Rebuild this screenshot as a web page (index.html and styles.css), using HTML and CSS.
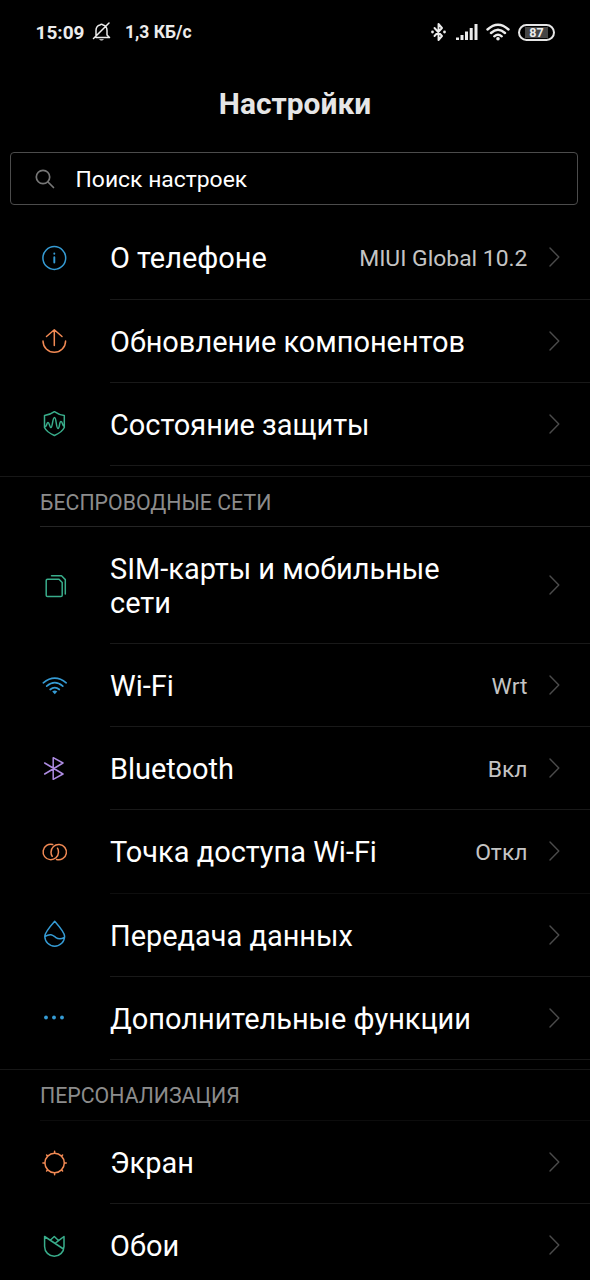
FILE: index.html
```html
<!DOCTYPE html>
<html lang="ru">
<head>
<meta charset="utf-8">
<title>Настройки</title>
<link rel="stylesheet" href="styles.css">
</head>
<body>
<svg class="defs" width="0" height="0"><defs>
  <symbol id="chevron" viewBox="0 0 12 20"><path d="M1 1 9.8 10 1 19"/></symbol>
</defs></svg>
<main class="screen">
  <header class="status">
    <span class="clock">15:09</span>
    <svg class="bell" width="20" height="20" viewBox="0 0 20 20"><path d="M4 15V8.5Q4 4 8 3Q9.500 1.500 11 3Q15 4 15 8.500V13L17.500 15.500H4M1.500 16.500 17 1"/><path class="solid" d="M7 17.300h5q-2.500 2.500-5 0z"/></svg>
    <span class="speed">1,3 КБ/с</span>
    <div class="indicators">
      <svg width="18" height="20" viewBox="0 0 18 20"><path class="semi" d="M4.500 6 12 14 8.500 18V2L12 6 4.500 14"/><circle class="solid" cx="2.500" cy="10" r="1.400"/><circle class="solid" cx="14.500" cy="10" r="1.400"/></svg>
      <svg class="signal" width="24" height="20" viewBox="0 0 24 20"><path class="solid" d="M1 15.500h3V18H1zM5.500 13h3v5h-3zM10 9.500h3V18h-3zM14.700 6h3v12h-3zM19.500 2h3v16h-3z"/></svg>
      <svg class="wifi" width="24" height="20" viewBox="0 0 24 20"><path class="thick" d="M1.500 7.500Q12-2 22.500 7.500M5 11Q12 4.500 19 11M8.300 14.300Q12 11 15.700 14.300"/><circle class="solid" cx="12" cy="16.800" r="1.800"/></svg>
      <span class="battery"><span class="charge">87</span></span>
    </div>
  </header>
  <h1 class="title">Настройки</h1>
  <div class="search">
    <svg width="20" height="20" viewBox="0 0 20 20"><circle cx="8" cy="8" r="6.700"/><path d="m13 13 5.500 5.500"/></svg>
    <span>Поиск настроек</span>
  </div>

  <section class="group">
    <div class="row">
      <svg class="icon blue" viewBox="-16 -16 32 32"><circle cx=".3" cy="0" r="11.400"/><path class="semi" d="M.3-.8V4.500M.3-4.600v.4"/></svg>
      <div class="body"><span class="label">О телефоне</span><span class="value">MIUI Global 10.2</span><svg class="chevron"><use href="#chevron"/></svg></div>
    </div>
    <div class="row">
      <svg class="icon orange" viewBox="-16 -16 32 32"><path d="M.3 4.500V-11M-7.500-4.500.3-11.200 8-4.500M-11 0a11.300 11.300 0 0 0 22.600 0"/></svg>
      <div class="body"><span class="label">Обновление компонентов</span><svg class="chevron"><use href="#chevron"/></svg></div>
    </div>
    <div class="row">
      <svg class="icon green" viewBox="-16 -16 32 32"><path d="M.4-12.300Q5-9 10.300-8.500V3.500Q8 8.300.4 11.500Q-7.200 8.300-9.500 3.500V-8.500Q-4-9 .4-12.300zM-9.500 2.500C-7 3.500-7.500-1.500-6-1.500S-4.500 3.500-3 3.500-1.500-6.500.5-6.500 2 4.500 4 4.500 5-2.500 7-2.500 8 2.500 10.300 2.500"/></svg>
      <div class="body"><span class="label">Состояние защиты</span><svg class="chevron"><use href="#chevron"/></svg></div>
    </div>
  </section>

  <section class="group divided">
    <h2 class="heading">БЕСПРОВОДНЫЕ СЕТИ</h2>
    <div class="row tall">
      <svg class="icon green" viewBox="-16 -16 32 32"><path d="M-6.500-5.700H5L8.200-2.500V10.200q0 1.300-1.300 1.300H-6.500q-1.300 0-1.300-1.300V-4.400q0-1.300 1.300-1.300zM-2.500-9.200H7.500L11.300-5.400V9"/></svg>
      <div class="body"><span class="label">SIM-карты и мобильные сети</span><svg class="chevron"><use href="#chevron"/></svg></div>
    </div>
    <div class="row">
      <svg class="icon blue" viewBox="-16 -16 32 32"><path class="medium" d="M-10.700-3.200Q.8-12.500 12.200-3.200M-7.300.2Q.8-6.800 8.800.2M-3.800 3.500Q.8-.3 5.300 3.500"/><path class="fill" d="M-1.800 5.500Q.8 3.700 3.300 5.500L.8 8.300z"/></svg>
      <div class="body"><span class="label">Wi-Fi</span><span class="value">Wrt</span><svg class="chevron"><use href="#chevron"/></svg></div>
    </div>
    <div class="row">
      <svg class="icon purple" viewBox="-16 -16 32 32"><path d="M-9.300-6 9 5-.8 10.300V-11.300L9-6-9.300 5"/></svg>
      <div class="body"><span class="label">Bluetooth</span><span class="value">Вкл</span><svg class="chevron"><use href="#chevron"/></svg></div>
    </div>
    <div class="row dim">
      <svg class="icon orange" viewBox="-16 -16 32 32"><path d="M-1.300-7.500A7.700 7.700 0 1 0 4.500.2Q4.500-2.300 3.500-3.800M2.500 7.500A7.700 7.700 0 1 0-3 .2Q-3 2.700-1.800 4.300"/></svg>
      <div class="body"><span class="label">Точка доступа Wi-Fi</span><span class="value">Откл</span><svg class="chevron"><use href="#chevron"/></svg></div>
    </div>
    <div class="row">
      <svg class="icon blue" viewBox="-16 -16 32 32"><path d="M.7-13.700Q-9.200-2.500-9.200 1.300A9.900 9.900 0 0 0 10.600 1.300Q10.600-2.500 .7-13.700zM-9.200 1.500C-3-2-1 .5 1.500 2.300S7 4.500 10.300 2.500"/></svg>
      <div class="body"><span class="label">Передача данных</span><svg class="chevron"><use href="#chevron"/></svg></div>
    </div>
    <div class="row">
      <svg class="icon blue" viewBox="-16 -16 32 32"><g class="fill"><circle cx="-8" cy="-.5" r="1.900"/><circle cx="0" cy="-.5" r="1.900"/><circle cx="8" cy="-.5" r="1.900"/></g></svg>
      <div class="body"><span class="label">Дополнительные функции</span><svg class="chevron"><use href="#chevron"/></svg></div>
    </div>
  </section>

  <section class="group divided close">
    <h2 class="heading faint">ПЕРСОНАЛИЗАЦИЯ</h2>
    <div class="row">
      <svg class="icon orange" viewBox="-16 -16 32 32"><circle cx=".6" cy="0" r="9.700"/><path d="M.6-10v-1.700M.6 10v1.700M-9.400 0h-1.700M10.600 0h1.700M-6.500-7.100-7.400-8M7.700-7.100 8.600-8M-6.500 7.100-7.400 8M7.700 7.100 8.600 8"/></svg>
      <div class="body"><span class="label">Экран</span><svg class="chevron"><use href="#chevron"/></svg></div>
    </div>
    <div class="row">
      <svg class="icon green" viewBox="-16 -16 32 32"><path d="M-9.400-9.500V.5A9.700 9.700 0 0 0 10 .5V-9.500L3.300-4.300M-9.400-9.500 9.500 3M-3.500-6 .3-9.500 4.500-5.500 1.500-3"/></svg>
      <div class="body"><span class="label">Обои</span><svg class="chevron"><use href="#chevron"/></svg></div>
    </div>
  </section>
</main>
</body>
</html>
```
FILE: styles.css
```css
* { box-sizing: border-box; }
body { margin: 0; background: #000; color: #fff; font-family: Roboto, sans-serif; }
svg { display: block; flex: none; fill: none; stroke: currentColor; stroke-width: 1.5; stroke-linecap: round; stroke-linejoin: round; }
.defs { position: absolute; }
.screen { width: 590px; height: 1280px; overflow: hidden; background: #000; }
.status { display: flex; align-items: center; height: 64px; padding: 0 35px 0 35.500px; color: #ececec; font-size: 19px; font-weight: 700; }
.bell { margin-left: 8px; }
.speed { margin-left: 12.500px; font-size: 17.500px; }
.solid { fill: currentColor; stroke: none; }
.semi { stroke-width: 1.900; }
.thick { stroke-width: 2.400; }
.medium { stroke-width: 1.700; }
.indicators { display: flex; align-items: center; margin-left: auto; }
.signal { margin-left: 7px; }
.wifi { margin-left: 7px; }
.battery { display: flex; width: 37px; height: 17px; margin-left: 8px; padding: 1px 5px; border: 2px solid #e6e6e6; border-radius: 9px; }
.charge { flex: 1; background: #454545; font-size: 12.500px; line-height: 12px; text-align: center; }
.title { margin: 0; height: 88px; padding-top: 23px; color: #e6e6e6; font-size: 29.900px; line-height: 34px; font-weight: 700; text-align: center; }
.search { display: flex; align-items: center; gap: 20.500px; height: 53px; margin: 0 12px 11.400px 10px; padding: 2px 0 0 24px; border: 1px solid #4c4c4c; border-radius: 4px; font-size: 22.900px; }
.search svg { margin-top: -2px; color: #777; stroke-width: 1.700; }
.row { display: flex; align-items: center; height: 83.200px; padding-left: 38px; }
.tall { height: 117px; }
.icon { width: 32px; height: 32px; margin-right: 40px; stroke-width: 1.500; }
.body { display: flex; flex: 1; align-items: center; height: 100%; padding-right: 29px; border-bottom: 1px solid #191919; }
.dim .body { border-bottom-color: #0e0e0e; }
.label { max-width: 370px; padding-top: 2px; font-size: 28.950px; line-height: 34px; }
.value { margin-left: auto; padding-top: 3px; color: #c4c4c4; font-size: 22.900px; }
.chevron { width: 12px; height: 20px; margin-left: auto; color: #4b4b4b; stroke-width: 1.400; }
.value + .chevron { margin-left: 21.500px; }
.divided { margin-top: 10px; border-top: 1px solid #171717; }
.close { margin-top: 9.200px; }
.heading { height: 50px; margin: 0 0 0 40px; border-bottom: 1px solid #252525; color: #8c8c8c; font-size: 21.300px; font-weight: 400; line-height: 51px; }
.faint { height: 51px; border-bottom-color: #0c0c0c; line-height: 52px; }
.fill { fill: currentColor; stroke: none; }
.blue { color: #359bd4; }
.orange { color: #f28a54; }
.green { color: #39ad8b; }
.purple { color: #ae8ce2; }
```
